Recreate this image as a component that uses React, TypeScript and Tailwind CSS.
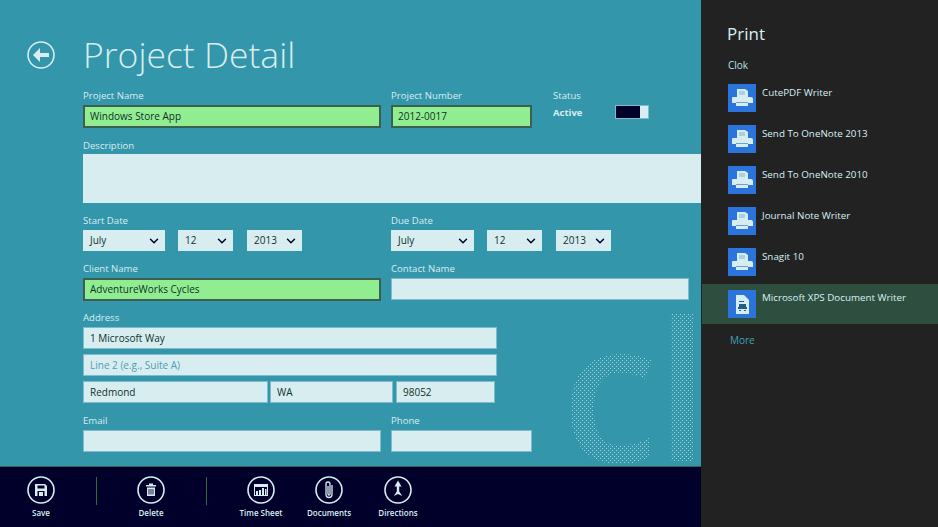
import { ChevronDown } from "lucide-react";

const font = "font-['Open_Sans',sans-serif]";

function Label({ text, tight }: { text: string; tight?: boolean }) {
    return <div className={`${tight ? "h-[16px]" : "h-[17px]"} text-[9.6px] leading-[16px] text-[#d8edf0]`}>{text}</div>;
}

function Field({ label, value, placeholder, width, green }: { label?: string; value?: string; placeholder?: string; width: string; green?: boolean }) {
    const box = green
        ? "h-[23px] bg-[#90ee90] border-2 border-[#3c5f4f] px-[5px] pb-[2px]"
        : "h-[22px] bg-[#d8edf0] border border-[#7fbccb] px-[6px]";
    return (
        <div className={`${width} shrink-0`}>
            {label && <Label text={label} />}
            <input
                readOnly
                defaultValue={value}
                placeholder={placeholder}
                className={`${box} block w-full text-[10px] text-[#10302c] outline-none placeholder:text-[#4f9db0] ${font}`}
            />
        </div>
    );
}

function Select({ value, width }: { value: string; width: string }) {
    return (
        <div className={`${width} h-[21px] flex items-center justify-between bg-[#d8edf0] pl-[7px] pr-[4px] text-[10px] text-[#10302c]`}>
            {value}
            <ChevronDown className="h-[14px] w-[14px] text-[#00002a]" strokeWidth={2.5} />
        </div>
    );
}

function DateRow({ label, first }: { label: string; first: string }) {
    return (
        <div>
            <Label text={label} />
            <div className="flex">
                <Select value="July" width={first} />
                <div className="ml-[13px]"><Select value="12" width="w-[55px]" /></div>
                <div className="ml-[14px]"><Select value="2013" width="w-[55px]" /></div>
            </div>
        </div>
    );
}

function Circle({ children }: { children: React.ReactNode }) {
    return (
        <svg viewBox="0 0 28 28" className="h-[28px] w-[28px]">
            <circle cx="14" cy="14" r="13" fill="none" stroke="#d8edf0" strokeWidth="1.6" />
            {children}
        </svg>
    );
}

function BarItem({ label, children }: { label: string; children: React.ReactNode }) {
    return (
        <div className="flex w-[68px] flex-col items-center pt-[9px]">
            <Circle>{children}</Circle>
            <div className="mt-[3px] text-[8px] font-semibold leading-[12px] text-[#d8edf0]">{label}</div>
        </div>
    );
}

function Printer() {
    return (
        <svg viewBox="0 0 28 28" className="h-[28px] w-[28px] shrink-0">
            <rect width="28" height="28" fill="#2b74dc" />
            <path d="M9 5h8l3 2v6H9z" fill="#d8edf0" />
            <path d="M11 8h6M11 10h6" stroke="#6a9fd8" strokeWidth="0.8" />
            <path d="M5 13h18a2 2 0 0 1 2 2v4h-5v-1H8v1H4v-5a1 1 0 0 1 1-1z" fill="#d8edf0" />
            <rect x="8" y="19" width="12" height="3" fill="#d8edf0" />
            <rect x="8" y="18" width="12" height="1" fill="#6a9fd8" />
        </svg>
    );
}

function XpsIcon() {
    return (
        <svg viewBox="0 0 28 28" className="h-[28px] w-[28px] shrink-0">
            <rect width="28" height="28" fill="#2b74dc" />
            <path d="M8 5h8l5 5v14H8z" fill="#d8edf0" />
            <path d="M11 11h5v1h-5zM11 14h7v3h-7zM10 17h9v2h-9zM11 20h2v1h-2zM16 20h2v1h-2z" fill="#1f5f8a" />
        </svg>
    );
}

const printers = ["CutePDF Writer", "Send To OneNote 2013", "Send To OneNote 2010", "Journal Note Writer", "Snagit 10"];

export default function App() {
    return (
        <div className={`flex h-[527px] w-[938px] overflow-hidden ${font}`}>
            <div className="flex w-[701px] flex-col">
                {/* Form */}
                <div className="relative h-[466px] bg-[#3396ab]">
                    <div
                        aria-hidden
                        className="absolute left-[561px] top-[259px] bg-[radial-gradient(circle_at_1.5px_1.5px,#a9d3dd_0.6px,transparent_0.7px),radial-gradient(circle_at_1.5px_1.5px,#a9d3dd_0.6px,transparent_0.7px)] bg-[length:4px_4px] bg-[position:0_0,2px_2px] bg-clip-text text-[195px] font-semibold leading-[256px] tracking-[-3px] text-transparent"
                    >
                        cl
                    </div>

                    <div className="relative">
                        <div className="flex h-[88px] items-start pl-[27px] pt-[41px]">
                            <svg viewBox="0 0 28 28" className="h-[28px] w-[28px]">
                                <circle cx="14" cy="14" r="13" fill="none" stroke="#d8edf0" strokeWidth="1.6" />
                                <path d="M6 14l7-7v5h9v4h-9v5z" fill="#d8edf0" />
                            </svg>
                            <h1 className="ml-[28px] -mt-[12px] text-[35.5px] font-light leading-[50px] text-[#d8edf0]">Project Detail</h1>
                        </div>

                        <div className="pl-[83px]">
                            <div className="flex">
                                <Field label="Project Name" value="Windows Store App" width="w-[298px]" green />
                                <div className="ml-[10px]">
                                    <Field label="Project Number" value="2012-0017" width="w-[141px]" green />
                                </div>
                                <div className="ml-[21px] w-[96px]">
                                    <Label text="Status" />
                                    <div className="flex items-start justify-between">
                                        <span className="text-[9.5px] font-bold leading-[16px] text-[#d8edf0]">Active</span>
                                        <div className="flex h-[14px] w-[34px] border border-[#7fbccb]">
                                            <div className="flex-1 bg-[#00002a]" />
                                            <div className="w-[8px] bg-[#d8edf0]" />
                                        </div>
                                    </div>
                                </div>
                            </div>

                            <div className="mt-[10px]">
                                <Label text="Description" tight />
                                <div className="h-[49px] w-[618px] bg-[#d8edf0]" />
                            </div>

                            <div className="mt-[10px] flex">
                                <DateRow label="Start Date" first="w-[82px]" />
                                <div className="ml-[89px]"><DateRow label="Due Date" first="w-[83px]" /></div>
                            </div>

                            <div className="mt-[10px] flex">
                                <Field label="Client Name" value="AdventureWorks Cycles" width="w-[298px]" green />
                                <div className="ml-[10px]">
                                    <Field label="Contact Name" width="w-[298px]" />
                                </div>
                            </div>

                            <div className="mt-[9px] w-[414px]">
                                <Field label="Address" value="1 Microsoft Way" width="w-full" />
                            </div>
                            <div className="mt-[5px] w-[414px]">
                                <Field placeholder="Line 2 (e.g., Suite A)" width="w-full" />
                            </div>
                            <div className="mt-[5px] flex">
                                <Field value="Redmond" width="w-[185px]" />
                                <div className="ml-[2px]"><Field value="WA" width="w-[123px]" /></div>
                                <div className="ml-[3px]"><Field value="98052" width="w-[99px]" /></div>
                            </div>

                            <div className="mt-[10px] flex">
                                <Field label="Email" width="w-[298px]" />
                                <div className="ml-[10px]"><Field label="Phone" width="w-[141px]" /></div>
                            </div>
                        </div>
                    </div>
                </div>

                {/* App bar */}
                <div className="flex h-[61px] items-start border-t border-[#3c5f4f] bg-[#00002a] pl-[7px]">
                    <BarItem label="Save">
                        <path d="M8 8h10l2 2v10H8z" fill="#d8edf0" />
                        <rect x="10.5" y="9.5" width="7" height="3" fill="#00002a" />
                        <rect x="10.5" y="15" width="7" height="5" fill="#00002a" />
                        <rect x="12" y="16" width="4" height="4" fill="#d8edf0" />
                    </BarItem>
                    <div className="ml-[21px] mr-[20px] mt-[10px] h-[28px] w-px bg-[#2f6b3a]" />
                    <BarItem label="Delete">
                        <path d="M9 9h10v1.5H9zM12 7.5h4V9h-4z" fill="#d8edf0" />
                        <path d="M10 11.5h8V20h-8z" fill="#d8edf0" />
                        <path d="M12 13v5.5M14 13v5.5M16 13v5.5" stroke="#00002a" strokeWidth="0.9" />
                    </BarItem>
                    <div className="ml-[21px] mr-[20px] mt-[10px] h-[28px] w-px bg-[#2f6b3a]" />
                    <BarItem label="Time Sheet">
                        <rect x="7" y="8" width="14" height="12" fill="#d8edf0" />
                        <rect x="8" y="11" width="12" height="8" fill="#00002a" />
                        <path d="M9 15h2v4H9zM12 14h2v5h-2zM15 12h2v7h-2zM18 13h1.5v6H18z" fill="#d8edf0" />
                    </BarItem>
                    <BarItem label="Documents">
                        <path
                            d="M17 9v9.500a3 3 0 0 1-6 0V8a2 2 0 0 1 4 0v10a1 1 0 0 1-2 0V10"
                            fill="none"
                            stroke="#d8edf0"
                            strokeWidth="1.3"
                        />
                    </BarItem>
                    <div className="ml-px">
                        <BarItem label="Directions">
                            <path d="M14 4.500l3.500 6H15.200v5l3 4.500-4.200-2-4.200 2 3-4.500v-5h-2.300z" fill="#d8edf0" />
                        </BarItem>
                    </div>
                </div>
            </div>

            {/* Print flyout */}
            <aside className="relative flex w-[237px] flex-col bg-[#222222] pt-[21px]">
                <div className="pl-[26px] text-[17px] leading-[26px] text-[#d8f0f4]">Print</div>
                <div className="mt-[10px] pl-[27px] text-[10px] leading-[16px] text-[#b5e3ea]">Clok</div>
                <div className="mt-[11px] flex flex-col gap-[13px] pl-[27px]">
                    {printers.map((name) => (
                        <div key={name} className="flex items-start gap-[6px]">
                            <Printer />
                            <span className="pt-[2px] text-[9.8px] leading-[14px] text-[#d8f0f4]">{name}</span>
                        </div>
                    ))}
                </div>
                <div className="ml-px mt-[8px] flex h-[40px] items-start gap-[6px] bg-[#2e4f3f] pl-[26px] pt-[6px]">
                    <XpsIcon />
                    <span className="pt-[1px] text-[9.8px] leading-[14px] text-[#d8f0f4]">Microsoft XPS Document Writer</span>
                </div>
                <div className="mt-[8px] pl-[29px] text-[10px] leading-[16px] text-[#3fa3b8]">More</div>
            </aside>
        </div>
    );
}
